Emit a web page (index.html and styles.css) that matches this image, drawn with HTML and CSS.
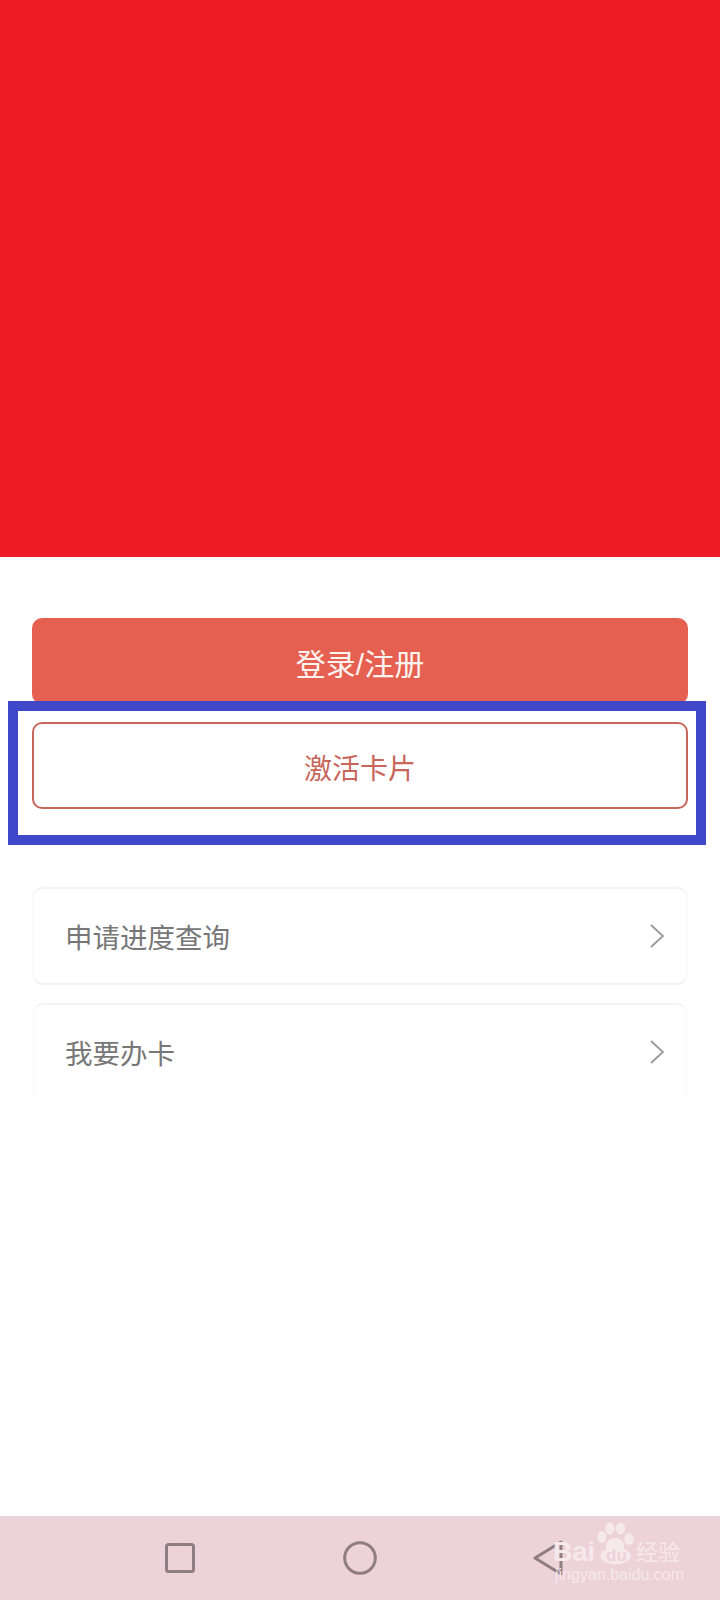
FILE: index.html
```html
<!DOCTYPE html>
<html lang="zh">
<head>
<meta charset="utf-8">
<title>激活卡片</title>
<link rel="stylesheet" href="styles.css">
</head>
<body>
<div class="screen">
  <div class="hero"></div>
  <main class="content">
    <div class="btn btn-primary">登录/注册</div>
    <div class="highlight">
      <div class="btn btn-outline">激活卡片</div>
    </div>
    <div class="list">
      <div class="card">
        <span class="card-label">申请进度查询</span>
        <svg class="chevron" viewBox="0 0 14 24" width="14" height="24"><path d="M1 1l12 11L1 23" fill="none" stroke="#999" stroke-width="1.9"/></svg>
      </div>
      <div class="card card-cut">
        <span class="card-label">我要办卡</span>
        <svg class="chevron" viewBox="0 0 14 24" width="14" height="24"><path d="M1 1l12 11L1 23" fill="none" stroke="#999" stroke-width="1.9"/></svg>
      </div>
    </div>
  </main>
  <nav class="navbar">
    <svg class="nav-square" viewBox="0 0 30 30" width="30" height="30"><rect x="1.5" y="1.5" width="27" height="27" rx="2" fill="none" stroke="#8f7d83" stroke-width="3"/></svg>
    <svg class="nav-circle" viewBox="0 0 34 34" width="34" height="34"><circle cx="17" cy="17" r="15.3" fill="none" stroke="#8f7d83" stroke-width="3"/></svg>
    <svg class="nav-back" viewBox="0 0 30 36" width="30" height="36"><path d="M28 2L2 18l26 16z" fill="none" stroke="#8f7d83" stroke-width="3" stroke-linejoin="round"/></svg>
    <div class="watermark">
      <div class="wm-top">
        <span class="wm-bai">Bai</span>
        <svg class="wm-paw" viewBox="0 0 38 44" width="38" height="44"><g fill="#f6e9ec"><ellipse cx="5" cy="15" rx="4.4" ry="6"/><ellipse cx="13" cy="6.5" rx="4.6" ry="6"/><ellipse cx="23.5" cy="6.5" rx="4.6" ry="6"/><ellipse cx="32" cy="17" rx="4.6" ry="6"/><ellipse cx="18" cy="24" rx="9" ry="8"/><ellipse cx="18.5" cy="34" rx="15" ry="8.5"/></g></svg>
        <span class="wm-du">du</span>
        <span class="wm-cn">经验</span>
      </div>
      <div class="wm-url">jingyan.baidu.com</div>
    </div>
  </nav>
</div>
</body>
</html>
```
FILE: styles.css
```css
* { box-sizing: border-box; }
html, body { margin: 0; padding: 0; background: #fff; }
body { font-family: "Liberation Sans", "Noto Sans CJK SC", sans-serif; }
.screen { width: 720px; height: 1600px; display: flex; flex-direction: column; overflow: hidden; }
.hero { height: 557px; flex: none; background: #ed1c24; }
.content { flex: 1; padding-top: 61px; }
.btn { display: flex; align-items: center; justify-content: center; border-radius: 10px; }
.btn-primary { height: 86px; margin: 0 32px; background: #e66052; color: #fdf3ee; font-size: 30px; padding-top: 2px; }
.highlight { margin: -3px 14px 0 8px; height: 144px; border: 10px solid #3f48c8; padding: 11px 8px 0 14px; }
.btn-outline { height: 87px; border: 2px solid #c9665c; color: #c9665c; font-size: 28px; padding-top: 2px; }
.list { margin: 42px 33px 0; display: flex; flex-direction: column; gap: 18px; }
.card { height: 98px; display: flex; align-items: center; justify-content: space-between; padding: 0 22px 0 31px; background: #fff; border: 1px solid #f8f8f8; border-top: 2px solid #f4f4f4; border-bottom: 2px solid #f1f1f1; border-radius: 10px; box-shadow: 0 0 4px rgba(0,0,0,.03); }
.card-cut { height: 94px; border-bottom: 0; border-radius: 10px 10px 0 0; box-shadow: none; padding-top: 2px; }
.card-label { font-size: 27.5px; color: #777; }
.chevron { flex: none; }
.navbar { position: relative; height: 84px; flex: none; background: #eed2d9; display: flex; align-items: center; padding-left: 165px; }
.nav-square { flex: none; }
.nav-circle { flex: none; margin-left: 148px; }
.nav-back { flex: none; margin-left: 156px; }
.watermark { position: absolute; left: 553px; top: 6px; width: 130px; color: #f6e9ec; }
.wm-top { position: relative; height: 43px; }
.wm-bai { position: absolute; left: 0; top: 15px; font-size: 27px; line-height: 30px; font-weight: bold; }
.wm-paw { position: absolute; left: 44px; top: 0; }
.wm-du { position: absolute; left: 49px; top: 24px; width: 29px; font-size: 17px; font-weight: bold; line-height: 20px; text-align: center; color: #eed2d9; }
.wm-cn { position: absolute; left: 83px; top: 18px; font-size: 22px; line-height: 26px; }
.wm-url { font-size: 16px; line-height: 20px; margin-left: 2px; white-space: nowrap; }
```
